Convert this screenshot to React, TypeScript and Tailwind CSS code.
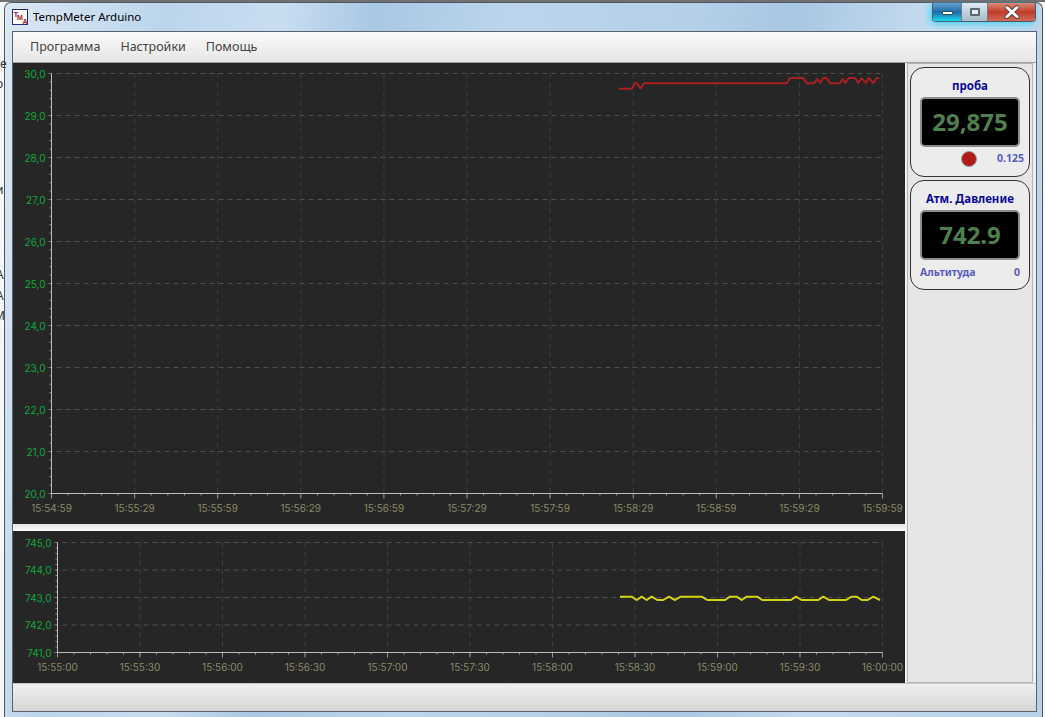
const redLine =
  '619,88.7 632,88.7 635,83.3 637,83.3 640.7,88.3 644,83.3 786.7,83.3 790,78 803,78 807.3,83.3 814,83.3 817.3,79 820,83 823.3,78 826.7,78 830,83.3 840,83.3 842.7,79 845.3,83 848.7,78 855,78 858.3,83 861.7,78 865.7,83 868.7,78 873.3,83 876.7,78 879.3,78';
const yellowLine =
  '620,596.7 631.7,596.7 636.7,600 641.7,596.7 646.7,600 651.7,596.7 657.3,600 663.3,600 669,596.7 675,600 680.7,596.7 701.7,596.7 707.3,600 725,600 730,596.7 736.7,596.7 741.7,600 746.7,596.7 757.3,596.7 762.3,600 791,600 796,596.7 801.7,600 818.3,600 823.3,596.7 829,600 846,600 851.7,596.7 856.7,596.7 861.7,600 867.7,600 873.3,596.7 880,600';

const topTimes = ['15:54:59', '15:55:29', '15:55:59', '15:56:29', '15:56:59', '15:57:29', '15:57:59', '15:58:29', '15:58:59', '15:59:29', '15:59:59'];
const bottomTimes = ['15:55:00', '15:55:30', '15:56:00', '15:56:30', '15:57:00', '15:57:30', '15:58:00', '15:58:30', '15:59:00', '15:59:30', '16:00:00'];
const topValues = ['30,0', '29,0', '28,0', '27,0', '26,0', '25,0', '24,0', '23,0', '22,0', '21,0', '20,0'];
const bottomValues = ['745,0', '744,0', '743,0', '742,0', '741,0'];

const labelFont = { fontFamily: 'Inter, "Noto Sans", sans-serif', fontSize: 10 };

// x0/x1 y0/y1 are page-relative plot edges, the svg is offset by left/top
function Chart({
  width,
  height,
  left,
  top,
  x0,
  x1,
  y0,
  y1,
  values,
  times,
  line,
  lineColor,
}: {
  width: number;
  height: number;
  left: number;
  top: number;
  x0: number;
  x1: number;
  y0: number;
  y1: number;
  values: string[];
  times: string[];
  line: string;
  lineColor: string;
}) {
  const stepX = (x1 - x0) / (times.length - 1);
  const stepY = (y1 - y0) / (values.length - 1);
  const minorX = Array.from({ length: (times.length - 1) * 5 + 1 }, (_, i) => x0 + (i * stepX) / 5);
  const minorY = Array.from({ length: (values.length - 1) * 5 + 1 }, (_, i) => y0 + (i * stepY) / 5);
  return (
    <svg width={width} height={height} viewBox={`${left} ${top} ${width} ${height}`} className="block">
      {values.map((_, i) => (
        <line key={i} x1={x0 - 4} x2={x1} y1={y0 + i * stepY} y2={y0 + i * stepY} stroke="#505050" strokeDasharray="5 4" />
      ))}
      {times.map((_, i) => (
        <line key={i} x1={x0 + i * stepX} x2={x0 + i * stepX} y1={y0} y2={y1 + 4} stroke="#3e3e3e" strokeDasharray="5 4" />
      ))}
      {minorY.map((y, i) => (
        <line key={i} x1={x0 - 2} x2={x0} y1={y} y2={y} stroke="#8a8a8a" />
      ))}
      {minorX.map((x, i) => (
        <line key={i} x1={x} x2={x} y1={y1} y2={y1 + (i % 5 === 0 ? 5 : 2)} stroke="#999999" />
      ))}
      <line x1={x0} x2={x0} y1={y0} y2={y1} stroke="#bdbdbd" />
      <line x1={x0} x2={x1} y1={y1} y2={y1} stroke="#bdbdbd" />
      {values.map((v, i) => (
        <text key={v} x={x0 - 6} y={y0 + i * stepY + 4} textAnchor="end" fill="#14a83c" style={labelFont}>
          {v}
        </text>
      ))}
      {times.map((t, i) => (
        <text key={t} x={x0 + i * stepX} y={y1 + 18} textAnchor="middle" fill="#8a8a66" style={labelFont}>
          {t}
        </text>
      ))}
      <polyline points={line} fill="none" stroke={lineColor} strokeWidth="2" strokeLinejoin="round" />
    </svg>
  );
}

function Lcd({ value }: { value: string }) {
  return (
    <div className="mx-auto flex h-[50px] w-[100px] items-center justify-center rounded-[5px] border-2 border-[#8c8c8c] bg-black text-[24px] font-bold text-[#4f7f4f] [font-family:'Noto_Sans',sans-serif]">
      {value}
    </div>
  );
}

function AppIcon() {
  return (
    <svg width="16" height="16" viewBox="0 0 16 16" className="shrink-0">
      <rect x="0.5" y="0.5" width="15" height="15" fill="#ffffff" stroke="#2a2a80" />
      <g fill="#a81818" fontFamily="'Liberation Sans', sans-serif" fontWeight="700">
        <text x="1.5" y="8" fontSize="8">T</text>
        <text x="5" y="11" fontSize="7">M</text>
        <text x="10.5" y="14.5" fontSize="7">A</text>
      </g>
    </svg>
  );
}

export default function App() {
  return (
    <div className="relative h-[717px] w-[1045px] overflow-hidden border-t-2 border-[#707070] bg-[#f6f6f6] pl-[4px] pr-[2px] text-[#222] [font-family:'Noto_Sans',sans-serif]">
      {/* bits of the window behind */}
      <div className="absolute left-0 top-[56px] text-[12px] leading-none text-[#333]">e</div>
      <div className="absolute left-[-4px] top-[76px] text-[12px] leading-none text-[#333]">o</div>
      <div className="absolute left-[-4px] top-[182px] text-[12px] leading-none text-[#333]">и</div>
      <div className="absolute left-[-4px] top-[267px] text-[12px] leading-none text-[#333]">A</div>
      <div className="absolute left-[-4px] top-[288px] text-[12px] leading-none text-[#333]">A</div>
      <div className="absolute left-[-6px] top-[308px] text-[12px] leading-none text-[#333]">M</div>

      <div className="flex h-[715px] flex-col rounded-t-[7px] border border-b-0 border-[#4e5864] bg-[linear-gradient(100deg,#dbe8f4_0%,#bcd5ec_14%,#c9ddf0_24%,#a9c8e4_32%,#bcd5ec_44%,#b4cfe8_60%,#a8c7e3_68%,#c6dbef_80%,#b5d0e9_100%)] pl-[7px] pr-[5px] pb-[5px]">
        {/* title bar */}
        <div className="flex h-[28px] shrink-0 items-center">
          <AppIcon />
          <span className="ml-[5px] text-[11.5px] text-black">TempMeter Arduino</span>
          <div className="ml-auto mr-[1px] flex h-[19px] -translate-y-[5px] rounded-b-[4px] border border-t-0 border-[#4a5a6a] shadow-[-2px_2px_7px_#43d4f5]">
            <div className="flex w-[28px] items-center justify-center rounded-bl-[3px] bg-gradient-to-b from-[#63a5d3] via-[#1d6aa3] to-[#17dcee]">
              <div className="mt-[2px] h-[4px] w-[11px] rounded-[1px] border border-[#3b4a55] bg-white" />
            </div>
            <div className="flex w-[27px] items-center justify-center border-x border-[#6d7c8a] bg-gradient-to-b from-[#dfe9f2] to-[#a8bac9]">
              <div className="h-[8px] w-[10px] rounded-[1px] border-2 border-[#5b6773] bg-[#e8eef3]" />
            </div>
            <div className="flex w-[47px] items-center justify-center rounded-br-[3px] bg-gradient-to-b from-[#dc8a7a] via-[#bd3a28] to-[#d36a58]">
              <svg width="18" height="14" viewBox="0 0 18 14">
                <path d="M4 2.5 14 11.5M14 2.5 4 11.5" stroke="#5b3a36" strokeWidth="4.5" strokeLinecap="round" />
                <path d="M4 2.5 14 11.5M14 2.5 4 11.5" stroke="#ffffff" strokeWidth="3" strokeLinecap="round" />
              </svg>
            </div>
          </div>
        </div>

        {/* client area */}
        <div className="flex min-h-0 flex-1 flex-col border border-[#59636e] bg-[#f0f0f0]">
          <div className="flex h-[30px] shrink-0 items-center gap-[20px] bg-gradient-to-b from-[#fafafa] to-[#e6e6e6] pl-[17px] pt-[1px] text-[12.5px] text-[#444]">
            <span>Программа</span>
            <span>Настройки</span>
            <span>Помощь</span>
          </div>

          <div className="flex min-h-0 flex-1 border-t border-[#a0a0a0]">
            <div className="flex w-[892px] shrink-0 flex-col">
              <div className="h-[461px] bg-[#262626]">
                <Chart width={892} height={461} left={13} top={63} x0={51.5} x1={882.5} y0={73.5} y1={493.5} values={topValues} times={topTimes} line={redLine} lineColor="#a82020" />
              </div>
              <div className="h-[7px] bg-gradient-to-b from-[#e4e4e4] to-[#fafafa]" />
              <div className="h-[152px] bg-[#262626]">
                <Chart width={892} height={152} left={13} top={531} x0={57.5} x1={882.5} y0={542.5} y1={652.5} values={bottomValues} times={bottomTimes} line={yellowLine} lineColor="#d4d414" />
              </div>
            </div>

            {/* gauges */}
            <div className="ml-[2px] mr-[3px] flex flex-1 flex-col gap-[3px] border border-[#b4b4b4] bg-[#e6e6e6] px-[2px] pt-[3px]">
              <div className="h-[110px] rounded-[14px] border border-[#333] bg-[#ececec] px-[8px]">
                <div className="mt-[11px] mb-[4px] text-center text-[11.5px] font-bold leading-[14px] text-[#0a0a96]">проба</div>
                <Lcd value="29,875" />
                <div className="mt-[4px] flex items-center">
                  <div className="ml-[42px] h-[16px] w-[16px] rounded-full border border-[#999] bg-[#b31b1b]" />
                  <span className="ml-auto mr-[-3px] text-[10.5px] font-bold text-[#5a5ac0]">0.125</span>
                </div>
              </div>
              <div className="h-[110px] rounded-[14px] border border-[#333] bg-[#ececec] px-[9px]">
                <div className="mt-[11px] mb-[4px] text-center text-[11.5px] font-bold leading-[14px] text-[#0a0a96]">Атм. Давление</div>
                <Lcd value="742.9" />
                <div className="mt-[5px] flex items-center justify-between text-[10.5px] font-bold text-[#5a5ac0]">
                  <span>Альтитуда</span>
                  <span>0</span>
                </div>
              </div>
            </div>
          </div>

          <div className="h-[28px] shrink-0 border-t border-[#c8c8c8] bg-gradient-to-b from-[#f0f0f0] to-[#d6d6d6]" />
        </div>
      </div>
    </div>
  );
}
